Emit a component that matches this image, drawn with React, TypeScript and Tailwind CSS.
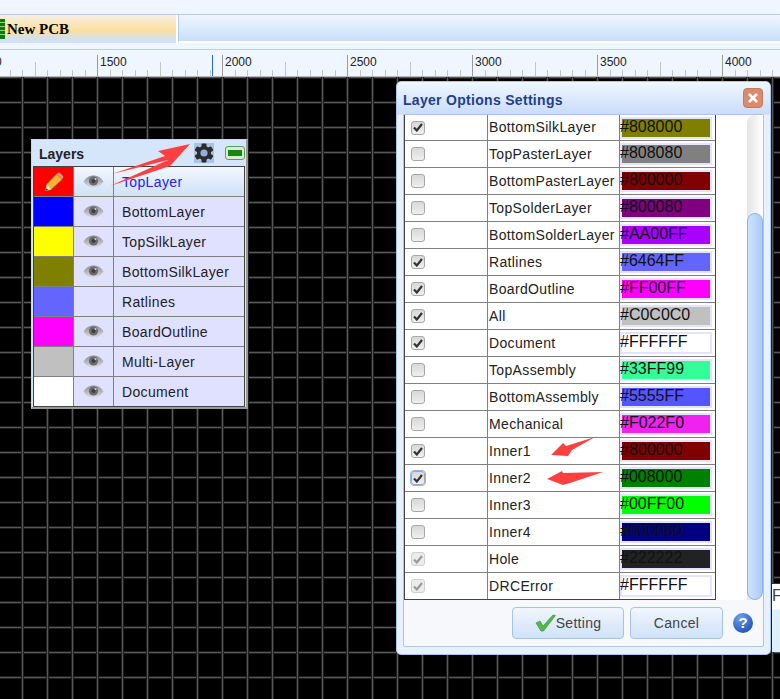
import React from 'react';

const LAYERS = [
    { name: 'TopLayer', color: '#FF0000', eye: true, active: true },
    { name: 'BottomLayer', color: '#0000FF', eye: true },
    { name: 'TopSilkLayer', color: '#FFFF00', eye: true },
    { name: 'BottomSilkLayer', color: '#808000', eye: true },
    { name: 'Ratlines', color: '#6464FF', eye: false },
    { name: 'BoardOutline', color: '#FF00FF', eye: true },
    { name: 'Multi-Layer', color: '#C0C0C0', eye: true },
    { name: 'Document', color: '#FFFFFF', eye: true },
];

const OPTIONS = [
    { name: 'BottomSilkLayer', color: '#808000', checked: true },
    { name: 'TopPasterLayer', color: '#808080', checked: false },
    { name: 'BottomPasterLayer', color: '#800000', checked: false },
    { name: 'TopSolderLayer', color: '#800080', checked: false },
    { name: 'BottomSolderLayer', color: '#AA00FF', checked: false },
    { name: 'Ratlines', color: '#6464FF', checked: true },
    { name: 'BoardOutline', color: '#FF00FF', checked: true },
    { name: 'All', color: '#C0C0C0', checked: true },
    { name: 'Document', color: '#FFFFFF', checked: true },
    { name: 'TopAssembly', color: '#33FF99', checked: false },
    { name: 'BottomAssembly', color: '#5555FF', checked: false },
    { name: 'Mechanical', color: '#F022F0', checked: false },
    { name: 'Inner1', color: '#800000', checked: true },
    { name: 'Inner2', color: '#008000', checked: true, focus: true },
    { name: 'Inner3', color: '#00FF00', checked: false },
    { name: 'Inner4', color: '#000080', checked: false },
    { name: 'Hole', color: '#222222', checked: true, disabled: true },
    { name: 'DRCError', color: '#FFFFFF', checked: true, disabled: true },
];

function Ruler() {
    const ticks: number[] = [];
    for (let x = 10; x < 780; x += 12.5) ticks.push(x);
    const labels = [1000, 1500, 2000, 2500, 3000, 3500, 4000];
    return (
        <svg width="780" height="27" className="block">
            {ticks.map((x) => {
                const n = Math.round((x - 97.5) / 12.5);
                const major = n % 10 === 0;
                const mid = !major && n % 5 === 0;
                const top = major ? 5 : mid ? 12 : 20;
                return <rect key={x} x={Math.floor(x)} y={top} width="1" height={26 - top} fill={major ? '#9a9a9a' : '#c4c4c4'} />;
            })}
            <rect x="212" y="5" width="1" height="22" fill="#1f6fd0" />
            <rect x="0" y="26" width="780" height="1" fill="#b8b8b8" />
            {labels.map((l, i) => (
                <text key={l} x={-25 + i * 125} y="15.5" fontSize="12" fill="#222" fontFamily="Liberation Sans, sans-serif">{l}</text>
            ))}
        </svg>
    );
}

function Eye() {
    return (
        <svg width="21" height="13" viewBox="0 0 21 13">
            <defs>
                <linearGradient id="eyeg" x1="0" y1="0" x2="0" y2="1">
                    <stop offset="0" stopColor="#8e8e8e" />
                    <stop offset="1" stopColor="#dcdcdc" />
                </linearGradient>
            </defs>
            <path d="M0.5 6.5C4 1 8 0.5 10.5 0.5S17 1 20.5 6.5C17 12 13 12.5 10.5 12.5S4 12 0.5 6.5Z" fill="url(#eyeg)" />
            <circle cx="10.5" cy="6" r="4.6" fill="#6a6a74" />
            <circle cx="10.5" cy="6" r="2" fill="#3c3c44" />
            <circle cx="12.5" cy="4" r="1" fill="#d0d0d8" />
        </svg>
    );
}

function Pencil() {
    return (
        <svg width="20" height="20" viewBox="0 0 20 20">
            <path d="M12.5 2L18 7.5L7 17.5L1.5 18.8L3 12Z" fill="#f2b632" stroke="#b07c1c" strokeWidth="0.6" />
            <path d="M12.5 2L14.5 0.6C15.6 0.2 19.6 4 19.2 5.2L18 7.5Z" fill="#e28a86" />
            <path d="M3 12L7 17.5L1.5 18.8Z" fill="#f6e2c0" />
            <path d="M1.5 18.8L2.2 16.2L4.2 18.1Z" fill="#333" />
        </svg>
    );
}

function Gear() {
    return (
        <svg width="20" height="20" viewBox="0 0 20 20" className="block bg-[#a9c4e6]">
            <g fill="#2c2c2c">
                <rect x="7.5" y="0.5" width="5" height="19" rx="1" />
                <rect x="7.5" y="0.5" width="5" height="19" rx="1" transform="rotate(60 10 10)" />
                <rect x="7.5" y="0.5" width="5" height="19" rx="1" transform="rotate(120 10 10)" />
                <circle cx="10" cy="10" r="7" />
            </g>
            <circle cx="10" cy="10" r="3.6" fill="#8fb0dc" />
        </svg>
    );
}

function Check({ color }: { color: string }) {
    return (
        <svg width="10" height="9" viewBox="0 0 10 9" className="block">
            <path d="M1 4.5L3.8 7.5L9 1" fill="none" stroke={color} strokeWidth="2.2" />
        </svg>
    );
}

function Checkbox({ checked, disabled, focus }: { checked: boolean; disabled?: boolean; focus?: boolean }) {
    return (
        <span
            className={`flex w-[14px] h-[14px] items-center justify-center rounded-[3px] border ${
                disabled ? 'border-[#cfcfcf] bg-[#ececec]' : 'border-[#a8a8a8] bg-[linear-gradient(to_bottom,#d8d8d8,#efefef)]'
            } ${focus ? 'outline outline-1 outline-[#8fb4ee]' : ''}`}
        >
            {checked && <Check color={disabled ? '#9a9a9a' : '#333333'} />}
        </span>
    );
}

export default function App() {
    return (
        <div className="relative w-[780px] h-[699px] overflow-hidden bg-black font-['Liberation_Sans',sans-serif] flex flex-col">
            {/* Top strip */}
            <div className="h-[15px] shrink-0 bg-[#f0f6ff] border-b border-[#b6cbe0]" />

            {/* Tabs */}
            <div className="h-[35px] shrink-0 bg-[#f0f6ff] border-b border-[#bcd0e4] flex items-start">
                <div className="w-[176px] h-[28px] flex items-center gap-[2px] bg-[linear-gradient(to_bottom,#f6efe3,#fddf9f_55%,#cfe0f8_90%)]">
                    <svg width="5" height="20" viewBox="0 0 5 20" className="block">
                        <rect width="5" height="20" fill="#0a7a0a" />
                        <rect y="3" width="5" height="1" fill="#8fd08f" />
                        <rect y="7" width="5" height="1" fill="#8fd08f" />
                        <rect y="11" width="5" height="1" fill="#8fd08f" />
                        <rect y="15" width="5" height="1" fill="#8fd08f" />
                    </svg>
                    <span className="font-['Liberation_Serif',serif] font-bold text-[15px] text-black">New PCB</span>
                </div>
                <div className="w-[2px] h-[29px] bg-white" />
                <div className="flex-1 h-[28px] border-l border-[#b6cbe0] bg-[linear-gradient(to_bottom,#f0f6ff,#c8def9)] border-b-2 border-b-white" />
            </div>

            {/* Ruler */}
            <div className="h-[27px] shrink-0 bg-[#f0f6ff]">
                <Ruler />
            </div>

            {/* Canvas */}
            <div className="flex-1 bg-black bg-[linear-gradient(to_right,#1e1e1e_1px,#585858_1px,#585858_2px,#1e1e1e_2px,#1e1e1e_3px,transparent_3px),linear-gradient(to_bottom,#1e1e1e_1px,#585858_1px,#585858_2px,#1e1e1e_2px,#1e1e1e_3px,transparent_3px)] bg-[length:25px_25px] bg-[position:21px_-1px]" />

            {/* Panel behind the dialog, cut off by the window edge */}
            <div className="absolute left-[772px] top-[583px] w-[8px] h-[69px] border-t border-[#333] bg-[linear-gradient(to_bottom,#ffffff_25px,#dff0fa_26px)] overflow-hidden text-[16px] leading-[24px] text-[#444]">
                F
            </div>

            {/* Layers window */}
            <div className="absolute left-[31px] top-[139px] w-[217px] h-[270px] bg-[#d6e6fa] border-r-2 border-b-2 border-[#9a9a9a] border-t border-l border-t-[#c8d8ec] border-l-[#c8d8ec]">
                <div className="h-[26px] flex items-center justify-between pl-[7px] pr-[1px]">
                    <span className="font-bold text-[14px] text-[#222] pt-[2px]">Layers</span>
                    <div className="flex items-center gap-[11px]">
                        <Gear />
                        <svg width="20" height="14" viewBox="0 0 20 14" className="block">
                            <rect x="0.5" y="0.5" width="19" height="13" rx="2.5" fill="#d8ecd8" stroke="#5f9a5f" />
                            <rect x="3" y="4" width="14" height="6" fill="#108a10" />
                        </svg>
                    </div>
                </div>
                <div className="ml-[1px] w-[212px] border border-[#444] bg-[#e0e0ff]">
                    {LAYERS.map((l, i) => (
                        <div key={l.name} className={`flex ${i > 0 ? 'h-[30px] border-t border-[#808080]' : 'h-[29px]'}`}>
                            <div className="w-[40px] border-r border-[#808080] flex items-center justify-center" style={{ backgroundColor: l.color }}>
                                {l.active && <Pencil />}
                            </div>
                            <div className={`w-[40px] border-r border-[#808080] flex items-center justify-center ${l.active ? 'bg-[linear-gradient(to_bottom,#f4f8ff,#cfe0f8)]' : ''}`}>
                                {l.eye && <Eye />}
                            </div>
                            <div className={`flex-1 flex items-center pl-[8px] pt-[2px] text-[14px] tracking-[0.35px] ${l.active ? 'text-[#2222ee] bg-[linear-gradient(to_bottom,#f4f8ff,#cfe0f8)]' : 'text-[#222]'}`}>
                                {l.name}
                            </div>
                        </div>
                    ))}
                </div>
            </div>

            {/* Layer Options dialog */}
            <div className="absolute left-[396px] top-[81px] w-[375px] h-[574px] rounded-[5px] border border-[#a9c6ee] bg-[linear-gradient(to_bottom,#f2f7ff,#c9dcfa_32px,#e8f0fc_33px)] flex flex-col px-[6px] pb-[7px]">
                <div className="h-[32px] shrink-0 flex items-center justify-between pr-[1px]">
                    <span className="font-bold text-[14px] tracking-[0.3px] text-[#1f3f8a] pt-[4px]">Layer Options Settings</span>
                    <div className="w-[20px] h-[20px] rounded-[4px] bg-[#dc8a6c] border border-[#c07a60] flex items-center justify-center">
                        <svg width="12" height="12" viewBox="0 0 12 12">
                            <path d="M2 2L10 10M10 2L2 10" stroke="#ffffff" strokeWidth="2.6" />
                        </svg>
                    </div>
                </div>
                <div className="flex-1 border border-[#a8c6f0] rounded-b-[2px] flex flex-col bg-[#f6f8fb]">
                    <div className="h-[485px] shrink-0 bg-white flex">
                        <div className="w-[312px] h-[485px] border-x border-b border-[#444] text-[14px] text-[#222] overflow-hidden">
                            {OPTIONS.map((o, i) => (
                                <div
                                    key={o.name}
                                    className={`flex ${i === 0 ? 'h-[26px] border-b border-[#808080]' : i === OPTIONS.length - 1 ? 'h-[26px]' : 'h-[27px] border-b border-[#808080]'}`}
                                >
                                    <div className="w-[83px] border-r border-[#808080] flex items-center pl-[6px]">
                                        <Checkbox checked={o.checked} disabled={o.disabled} focus={o.focus} />
                                    </div>
                                    <div className="w-[132px] border-r border-[#808080] flex items-center pl-[1px] tracking-[0.35px]">{o.name}</div>
                                    <div className="flex-1 flex items-center">
                                        <div
                                            className="w-[92px] h-[22px] shadow-[inset_0_0_0_2px_#e4e4ff] text-[16px] leading-[20px] text-[#111]"
                                            style={{ backgroundColor: o.color }}
                                        >
                                            {o.color}
                                        </div>
                                    </div>
                                </div>
                            ))}
                        </div>
                        <div className="flex-1 relative">
                            <div className="absolute right-0 top-0 bottom-0 w-[16px] rounded-t-full bg-[linear-gradient(to_right,#e4e4e4,#ffffff)]" />
                            <div className="absolute right-0 top-[98px] bottom-0 w-[16px] rounded-full bg-[linear-gradient(to_right,#cfe3fb,#a9ccf6)] border border-[#86b4ee]" />
                        </div>
                    </div>
                    <div className="flex-1 flex items-center pl-[108px] gap-[6px]">
                        <div className="w-[112px] h-[32px] rounded-[4px] border border-[#a4c4ec] bg-[linear-gradient(to_bottom,#f2f7ff,#dbe8fb_65%,#d2e2fa)] flex items-center justify-center text-[14px] tracking-[0.3px] text-[#444]">
                            <svg width="21" height="18" viewBox="0 0 21 18">
                                <path d="M1 9L5 7L8 12L18 1L20.5 1.5L8.5 17L6 17Z" fill="#54b94c" stroke="#2f8a30" strokeWidth="0.6" />
                            </svg>
                            Setting
                        </div>
                        <div className="w-[93px] h-[32px] rounded-[4px] border border-[#a4c4ec] bg-[linear-gradient(to_bottom,#f2f7ff,#dbe8fb_65%,#d2e2fa)] flex items-center justify-center text-[14px] tracking-[0.3px] text-[#444]">
                            Cancel
                        </div>
                        <div className="ml-[4px] w-[20px] h-[20px] rounded-full bg-[radial-gradient(circle_at_35%_25%,#6fa0ec,#0f3fa8)] flex items-center justify-center font-bold text-[15px] text-white">
                            ?
                        </div>
                    </div>
                </div>
            </div>

            {/* Annotation arrows */}
            <svg width="780" height="699" className="absolute left-0 top-0 pointer-events-none">
                <polygon points="190,144 158,151 165,156 112,174 168,160 110,186 170,166" fill="#ff4040" />
                <polygon points="551,455 563,443 566,446 595,437 572,450 568,456" fill="#ff4040" />
                <polygon points="547,479 562,471 563,473 603,472 573,482 563,485" fill="#ff4040" />
            </svg>
        </div>
    );
}
